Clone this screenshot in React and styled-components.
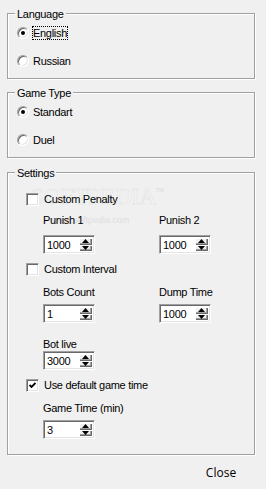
import React from "react";
import styled, { createGlobalStyle } from "styled-components";

const GlobalStyle = createGlobalStyle`
  html, body {
    margin: 0;
    padding: 0;
    background: #f0f0f0;
  }
  body {
    width: 266px;
    height: 489px;
    overflow: hidden;
    font-family: "Liberation Sans", Arial, sans-serif;
    font-size: 11px;
    letter-spacing: -0.3px;
    color: #000;
  }
`;

const Dialog = styled.div`
  position: relative;
  width: 266px;
  height: 489px;
  box-sizing: border-box;
  padding: 13px 0 0 7px;
  display: flex;
  flex-direction: column;
`;

const Group = styled.div`
  position: relative;
  box-sizing: border-box;
  width: 248px;
  height: ${(p) => p.$h}px;
  margin-top: ${(p) => p.$mt || 0}px;
  border: 1px solid #a0a0a0;
  box-shadow: inset 1px 1px 0 #fff, 1px 1px 0 #fff;
  display: flex;
  flex-direction: column;
  padding: ${(p) => p.$pad};
`;

const Legend = styled.span`
  position: absolute;
  left: 7px;
  top: -6px;
  padding: 0 2px;
  line-height: 13px;
  background: #f0f0f0;
`;

const RadioList = styled.div`
  display: flex;
  flex-direction: column;
  gap: 14px;
`;

const RadioRow = styled.div`
  display: flex;
  align-items: center;
  height: 14px;
`;

const RadioDot = styled.span`
  position: relative;
  box-sizing: border-box;
  width: 12px;
  height: 12px;
  border-radius: 50%;
  background: #fff;
  border: 1px solid;
  border-color: #a0a0a0 #fff #fff #a0a0a0;
  box-shadow: inset 1px 1px 0 #696969, inset -1px -1px 0 #e3e3e3;

  &::after {
    content: "";
    display: ${(p) => (p.$on ? "block" : "none")};
    position: absolute;
    left: 3px;
    top: 3px;
    width: 4px;
    height: 4px;
    border-radius: 50%;
    background: #000;
  }
`;

const RadioText = styled.span`
  margin-left: 3px;
  line-height: 12px;
  border: 1px dotted ${(p) => (p.$focus ? "#000" : "transparent")};
`;

const CheckRow = styled.div`
  position: relative;
  display: flex;
  align-items: center;
  height: 14px;
  margin-top: ${(p) => p.$mt}px;
  gap: 5px;
  line-height: 14px;
`;

const CheckBox = styled.span`
  box-sizing: border-box;
  width: 13px;
  height: 13px;
  background: #fff;
  border: 1px solid;
  border-color: #a0a0a0 #fff #fff #a0a0a0;
  box-shadow: inset 1px 1px 0 #696969, inset -1px -1px 0 #e3e3e3;
  display: flex;
  align-items: center;
  justify-content: center;
`;

const Fields = styled.div`
  position: relative;
  display: grid;
  grid-template-columns: 116px 1fr;
  margin-top: ${(p) => p.$mt}px;
  margin-left: 17px;
`;

const Field = styled.div`
  display: flex;
  flex-direction: column;
  gap: ${(p) => p.$gap}px;
`;

const FieldLabel = styled.span`
  height: 14px;
  line-height: 14px;
`;

const SpinBox = styled.div`
  box-sizing: border-box;
  width: 52px;
  height: 19px;
  padding: 2px;
  display: flex;
  background: #fff;
  border: 1px solid;
  border-color: #a0a0a0 #fff #fff #a0a0a0;
  box-shadow: inset 1px 1px 0 #696969, inset -1px -1px 0 #e3e3e3;
`;

const SpinValue = styled.span`
  flex: 1;
  line-height: 15px;
  padding-left: 1px;
`;

const UpDown = styled.div`
  width: 13px;
  display: flex;
  flex-direction: column;
`;

const SpinHalf = styled.div`
  flex: 1;
  display: flex;
  align-items: center;
  justify-content: center;
  background: #f0f0f0;
  box-shadow: inset 1px 1px 0 #fff, inset -1px -1px 0 #696969, inset -2px -2px 0 #a0a0a0;
`;

const Footer = styled.div`
  display: flex;
  justify-content: flex-end;
  width: 248px;
  margin-top: 6px;
`;

const CloseButton = styled.button`
  width: 68px;
  height: 23px;
  padding: 0;
  border: none;
  background: transparent;
  font-family: "Open Sans", "Noto Sans", sans-serif;
  font-size: 12px;
  letter-spacing: 0;
  color: #000;
`;

const Watermark = styled.div`
  position: absolute;
  left: 31px;
  top: 183px;
  font-family: "Liberation Serif", serif;
  font-size: 24px;
  letter-spacing: -0.5px;
  color: #f4f4f4;
  -webkit-text-stroke: 0.5px #e2e2e2;
  pointer-events: none;

  sup {
    font-family: "Liberation Sans", sans-serif;
    font-size: 6px;
    -webkit-text-stroke: 0;
    color: #dadada;
    vertical-align: 12px;
  }
`;

const WatermarkUrl = styled.div`
  position: absolute;
  left: 52px;
  top: 215px;
  font-size: 9px;
  letter-spacing: 0;
  color: #dedede;
  pointer-events: none;
`;

function Arrow({ up }) {
  return (
    <svg width="7" height="4" viewBox="0 0 7 4">
      <polygon points={up ? "3.5,0 7,4 0,4" : "0,0 7,0 3.5,4"} fill="#000" />
    </svg>
  );
}

function Spin({ value }) {
  return (
    <SpinBox>
      <SpinValue>{value}</SpinValue>
      <UpDown>
        <SpinHalf>
          <Arrow up />
        </SpinHalf>
        <SpinHalf>
          <Arrow />
        </SpinHalf>
      </UpDown>
    </SpinBox>
  );
}

function Check({ mt, checked, children }) {
  return (
    <CheckRow $mt={mt}>
      <CheckBox>
        {checked && (
          <svg width="7" height="7" viewBox="0 0 7 7">
            <path d="M0.5 3 L2.5 5 L6.5 1" fill="none" stroke="#000" strokeWidth="1.8" />
          </svg>
        )}
      </CheckBox>
      <span>{children}</span>
    </CheckRow>
  );
}

function Radio({ on, focus, children }) {
  return (
    <RadioRow>
      <RadioDot $on={on} />
      <RadioText $focus={focus}>{children}</RadioText>
    </RadioRow>
  );
}

export default function App() {
  return (
    <>
      <GlobalStyle />
      <Dialog>
        <Watermark>
          SOFTPEDIA<sup>TM</sup>
        </Watermark>
        <WatermarkUrl>www.softpedia.com</WatermarkUrl>

        <Group $h={66} $pad="12px 0 0 9px">
          <Legend>Language</Legend>
          <RadioList>
            <Radio on focus>
              English
            </Radio>
            <Radio>Russian</Radio>
          </RadioList>
        </Group>

        <Group $h={66} $mt={13} $pad="12px 0 0 9px">
          <Legend>Game Type</Legend>
          <RadioList>
            <Radio on>Standart</Radio>
            <Radio>Duel</Radio>
          </RadioList>
        </Group>

        <Group $h={283} $mt={14} $pad="0 0 0 18px">
          <Legend>Settings</Legend>
          <Check mt={19}>Custom Penalty</Check>
          <Fields $mt={7}>
            <Field $gap={8}>
              <FieldLabel>Punish 1</FieldLabel>
              <Spin value="1000" />
            </Field>
            <Field $gap={8}>
              <FieldLabel>Punish 2</FieldLabel>
              <Spin value="1000" />
            </Field>
          </Fields>
          <Check mt={8}>Custom Interval</Check>
          <Fields $mt={9}>
            <Field $gap={5}>
              <FieldLabel>Bots Count</FieldLabel>
              <Spin value="1" />
            </Field>
            <Field $gap={5}>
              <FieldLabel>Dump Time</FieldLabel>
              <Spin value="1000" />
            </Field>
          </Fields>
          <Fields $mt={14}>
            <Field $gap={0}>
              <FieldLabel>Bot live</FieldLabel>
              <Spin value="3000" />
            </Field>
          </Fields>
          <Check mt={8} checked>
            Use default game time
          </Check>
          <Fields $mt={9}>
            <Field $gap={5}>
              <FieldLabel>Game Time (min)</FieldLabel>
              <Spin value="3" />
            </Field>
          </Fields>
        </Group>

        <Footer>
          <CloseButton>Close</CloseButton>
        </Footer>
      </Dialog>
    </>
  );
}
